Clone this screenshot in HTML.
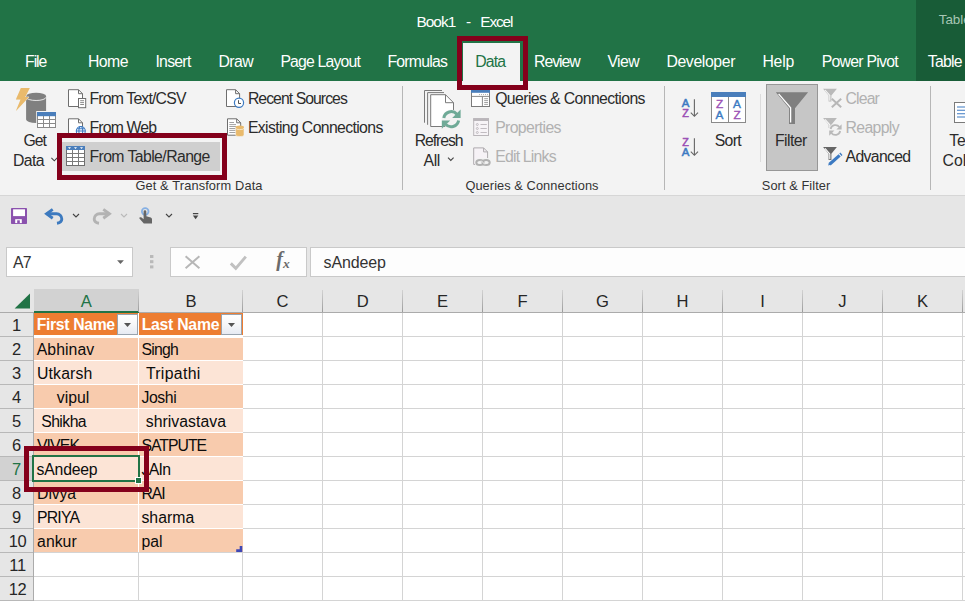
<!DOCTYPE html>
<html lang="en"><head><meta charset="utf-8"><title>Book1 - Excel</title>
<style>
*{margin:0;padding:0;box-sizing:border-box}
html,body{width:965px;height:601px;overflow:hidden;background:#e6e6e6}
body{font-family:"Liberation Sans",sans-serif}
#app{position:relative;width:965px;height:601px;overflow:hidden;background:#e6e6e6}
#app div,#app svg{position:absolute}
.t{position:absolute;white-space:nowrap;line-height:0;z-index:3}
.z5{z-index:5}
#txt{position:absolute;left:0;top:0;width:965px;height:601px;overflow:hidden}
.redbox{border:5px solid #7e0a1f;z-index:6}
.gl{background:#d4d4d4}

</style></head><body>
<div id="app">
<div style="left:0;top:0;width:965px;height:81px;background:#217346"></div>
<div style="left:916px;top:0;width:49px;height:81px;background:#185c37"></div>
<div style="left:463px;top:43px;width:57px;height:39px;background:#f3f3f3"></div>
<div style="left:0;top:81px;width:965px;height:114px;background:#f3f3f3"></div>
<div style="left:0;top:195px;width:965px;height:1px;background:#d6d6d6"></div>
<div style="left:402px;top:86px;width:1px;height:104px;background:#b6b6b6"></div>
<div style="left:664px;top:86px;width:1px;height:104px;background:#b6b6b6"></div>
<div style="left:930px;top:86px;width:1px;height:104px;background:#b6b6b6"></div>
<div style="left:760px;top:94px;width:1px;height:68px;background:#dcdcdc"></div>
<div style="left:62px;top:142px;width:158px;height:29px;background:#cfcfcf"></div>
<div style="left:766px;top:84px;width:52px;height:87px;background:#c6c6c6;border:1px solid #979797"></div>
<div style="left:6px;top:247px;width:127px;height:30px;background:#fff;border:1px solid #c9c9c9"></div>
<div style="left:170px;top:247px;width:137px;height:30px;background:#fdfdfd;border:1px solid #c9c9c9"></div>
<div style="left:310px;top:247px;width:660px;height:30px;background:#fdfdfd;border:1px solid #c9c9c9"></div>
<div style="left:34px;top:313px;width:931px;height:288px;background:#fff"></div>
<div style="left:34px;top:289px;width:105px;height:22px;background:#d2d2d2"></div>
<div style="left:34px;top:311px;width:105px;height:2px;background:#217346"></div>
<div style="left:139px;top:312px;width:826px;height:1px;background:#ababab"></div>
<div style="left:0px;top:312px;width:34px;height:1px;background:#ababab"></div>
<div style="left:138px;top:290px;width:1px;height:22px;background:linear-gradient(#d2d2d2,#9c9c9c)"></div>
<div style="left:242px;top:290px;width:1px;height:22px;background:linear-gradient(#d2d2d2,#9c9c9c)"></div>
<div style="left:322px;top:290px;width:1px;height:22px;background:linear-gradient(#d2d2d2,#9c9c9c)"></div>
<div style="left:402px;top:290px;width:1px;height:22px;background:linear-gradient(#d2d2d2,#9c9c9c)"></div>
<div style="left:482px;top:290px;width:1px;height:22px;background:linear-gradient(#d2d2d2,#9c9c9c)"></div>
<div style="left:562px;top:290px;width:1px;height:22px;background:linear-gradient(#d2d2d2,#9c9c9c)"></div>
<div style="left:642px;top:290px;width:1px;height:22px;background:linear-gradient(#d2d2d2,#9c9c9c)"></div>
<div style="left:722px;top:290px;width:1px;height:22px;background:linear-gradient(#d2d2d2,#9c9c9c)"></div>
<div style="left:802px;top:290px;width:1px;height:22px;background:linear-gradient(#d2d2d2,#9c9c9c)"></div>
<div style="left:882px;top:290px;width:1px;height:22px;background:linear-gradient(#d2d2d2,#9c9c9c)"></div>
<div style="left:962px;top:290px;width:1px;height:22px;background:linear-gradient(#d2d2d2,#9c9c9c)"></div>
<div class="gl" style="left:138px;top:313px;width:1px;height:288px"></div>
<div class="gl" style="left:242px;top:313px;width:1px;height:288px"></div>
<div class="gl" style="left:322px;top:313px;width:1px;height:288px"></div>
<div class="gl" style="left:402px;top:313px;width:1px;height:288px"></div>
<div class="gl" style="left:482px;top:313px;width:1px;height:288px"></div>
<div class="gl" style="left:562px;top:313px;width:1px;height:288px"></div>
<div class="gl" style="left:642px;top:313px;width:1px;height:288px"></div>
<div class="gl" style="left:722px;top:313px;width:1px;height:288px"></div>
<div class="gl" style="left:802px;top:313px;width:1px;height:288px"></div>
<div class="gl" style="left:882px;top:313px;width:1px;height:288px"></div>
<div class="gl" style="left:962px;top:313px;width:1px;height:288px"></div>
<div class="gl" style="left:34px;top:336px;width:931px;height:1px"></div>
<div class="gl" style="left:34px;top:360px;width:931px;height:1px"></div>
<div class="gl" style="left:34px;top:384px;width:931px;height:1px"></div>
<div class="gl" style="left:34px;top:408px;width:931px;height:1px"></div>
<div class="gl" style="left:34px;top:432px;width:931px;height:1px"></div>
<div class="gl" style="left:34px;top:456px;width:931px;height:1px"></div>
<div class="gl" style="left:34px;top:480px;width:931px;height:1px"></div>
<div class="gl" style="left:34px;top:504px;width:931px;height:1px"></div>
<div class="gl" style="left:34px;top:528px;width:931px;height:1px"></div>
<div class="gl" style="left:34px;top:552px;width:931px;height:1px"></div>
<div class="gl" style="left:34px;top:576px;width:931px;height:1px"></div>
<div class="gl" style="left:34px;top:600px;width:931px;height:1px"></div>
<div style="left:33px;top:313px;width:1px;height:288px;background:#ababab"></div>
<div style="left:0px;top:336px;width:33px;height:1px;background:#b8b8b8"></div>
<div style="left:0px;top:360px;width:33px;height:1px;background:#b8b8b8"></div>
<div style="left:0px;top:384px;width:33px;height:1px;background:#b8b8b8"></div>
<div style="left:0px;top:408px;width:33px;height:1px;background:#b8b8b8"></div>
<div style="left:0px;top:432px;width:33px;height:1px;background:#b8b8b8"></div>
<div style="left:0px;top:456px;width:33px;height:1px;background:#b8b8b8"></div>
<div style="left:0px;top:480px;width:33px;height:1px;background:#b8b8b8"></div>
<div style="left:0px;top:504px;width:33px;height:1px;background:#b8b8b8"></div>
<div style="left:0px;top:528px;width:33px;height:1px;background:#b8b8b8"></div>
<div style="left:0px;top:552px;width:33px;height:1px;background:#b8b8b8"></div>
<div style="left:0px;top:576px;width:33px;height:1px;background:#b8b8b8"></div>
<div style="left:0px;top:600px;width:33px;height:1px;background:#b8b8b8"></div>
<div style="left:0px;top:457px;width:32px;height:23px;background:#d2d2d2"></div>
<div style="left:32px;top:457px;width:2px;height:23px;background:#217346"></div>
<div style="left:34px;top:313px;width:209px;height:22px;background:#ed7d31"></div>
<div style="left:34px;top:335px;width:209px;height:3px;background:#fff"></div>
<div style="left:34px;top:338px;width:209px;height:22px;background:#f8cbad"></div>
<div style="left:34px;top:361px;width:209px;height:23px;background:#fce4d6"></div>
<div style="left:34px;top:360px;width:209px;height:1px;background:#fff"></div>
<div style="left:34px;top:385px;width:209px;height:23px;background:#f8cbad"></div>
<div style="left:34px;top:384px;width:209px;height:1px;background:#fff"></div>
<div style="left:34px;top:409px;width:209px;height:23px;background:#fce4d6"></div>
<div style="left:34px;top:408px;width:209px;height:1px;background:#fff"></div>
<div style="left:34px;top:433px;width:209px;height:23px;background:#f8cbad"></div>
<div style="left:34px;top:432px;width:209px;height:1px;background:#fff"></div>
<div style="left:34px;top:457px;width:209px;height:23px;background:#fce4d6"></div>
<div style="left:34px;top:456px;width:209px;height:1px;background:#fff"></div>
<div style="left:34px;top:481px;width:209px;height:23px;background:#f8cbad"></div>
<div style="left:34px;top:480px;width:209px;height:1px;background:#fff"></div>
<div style="left:34px;top:505px;width:209px;height:23px;background:#fce4d6"></div>
<div style="left:34px;top:504px;width:209px;height:1px;background:#fff"></div>
<div style="left:34px;top:529px;width:209px;height:23px;background:#f8cbad"></div>
<div style="left:34px;top:528px;width:209px;height:1px;background:#fff"></div>
<div style="left:138px;top:313px;width:1px;height:239px;background:#fff"></div>
<div style="left:32px;top:455px;width:108px;height:27px;border:2px solid #217346;z-index:4"></div>
<div style="left:135px;top:477px;width:7px;height:7px;background:#217346;border:1px solid #fff;z-index:4"></div>
<div class="redbox" style="left:457px;top:36px;width:71px;height:54px;border-color:#84001b"></div>
<div class="redbox" style="left:57px;top:133px;width:170px;height:47px;border-color:#84001b"></div>
<div class="redbox" style="left:24px;top:446px;width:125px;height:46px;border-color:#84001b"></div>
<svg style="left:0;top:0;z-index:2" width="965" height="601" viewBox="0 0 965 601">
<!-- Get Data -->
<g>
<path d="M26.1,96.1 V119.6 A10,3.3 0 0 0 46.1,119.6 V96.1 Z" fill="#808080"/>
<ellipse cx="36.1" cy="96.1" rx="10" ry="3.3" fill="#808080"/>
<path d="M26.3,97.3 A9.8,3.2 0 0 0 45.9,97.3" stroke="#f3f3f3" stroke-width="0.9" fill="none"/>
<polygon points="20.9,88 29.8,88 25.2,97 28.9,97 15.9,111 20.6,99.6 15.9,99.6" fill="#e9ba6c" stroke="#f3f3f3" stroke-width="0.8"/>
<polygon points="20.9,88 29.8,88 25.2,97 28.9,97 15.9,111 20.6,99.6 15.9,99.6" fill="#e9ba6c"/>
<rect x="36.2" y="111" width="20.6" height="17.6" fill="#f3f3f3"/>
<rect x="37.5" y="112.5" width="18" height="15" fill="#fff" stroke="#8a8a8a" stroke-width="1"/>
<rect x="37" y="112" width="19" height="4.2" fill="#4a7ebb"/>
<path d="M43.5,116 V127.5 M49.5,116 V127.5 M37.5,119.5 H55.5 M37.5,123.5 H55.5" stroke="#8a8a8a" stroke-width="1" fill="none"/>
</g>
<!-- Data chevron -->
<path d="M51.4,157.9 L54.3,160.8 L57.2,157.9" stroke="#444" stroke-width="1.1" fill="none"/>
<!-- From Text/CSV -->
<g fill="#fff" stroke="#6e6e6e" stroke-width="1">
<path d="M68.5,89.7 H78.5 L82.5,93.7 V106.5 H68.5 Z"/>
<path d="M78.5,89.7 V93.7 H82.5" fill="none"/>
<rect x="78.5" y="98.5" width="7.2" height="9.2"/>
<path d="M80.2,100.7 H84 M80.2,102.6 H84 M80.2,104.5 H84" stroke-width="0.8"/>
</g>
<!-- From Web -->
<g fill="#fff" stroke="#6e6e6e" stroke-width="1">
<path d="M68.5,118.8 H78.5 L82.5,122.8 V135.6 H68.5 Z"/>
<path d="M78.5,118.8 V122.8 H82.5" fill="none"/>
</g>
<g stroke="#3c7ac2" stroke-width="1.1" fill="#fff">
<circle cx="80.8" cy="131" r="4.5"/>
<ellipse cx="80.8" cy="131" rx="1.9" ry="4.5" fill="none"/>
<path d="M76.3,131 H85.3 M77,128.8 H84.6" fill="none"/>
</g>
<!-- From Table/Range icon -->
<g style="">
<rect x="66.5" y="146.5" width="18" height="19" fill="#fff" stroke="#6e6e6e"/>
<rect x="66" y="146" width="19" height="4" fill="#4a7ebb"/>
<path d="M72.5,150 V165 M78.5,150 V165 M67,153.5 H84 M67,157.5 H84 M67,161.5 H84" stroke="#7a7a7a" stroke-width="1" fill="none"/>
<path d="M68,147.2 h3 l-1.5,1.7z M74,147.2 h3 l-1.5,1.7z M80,147.2 h3 l-1.5,1.7z" fill="#fff"/>
</g>
<!-- Recent Sources -->
<g fill="#fff" stroke="#6e6e6e" stroke-width="1">
<path d="M226.5,89.7 H235.6 L239.6,93.7 V106.5 H226.5 Z"/>
<path d="M235.6,89.7 V93.7 H239.6" fill="none"/>
</g>
<circle cx="239" cy="102.7" r="4.6" fill="#fff" stroke="#3c7ac2" stroke-width="1.2"/>
<path d="M238.5,100.2 V103.5 H241" stroke="#555" stroke-width="1" fill="none"/>
<!-- Existing Connections -->
<g fill="#fff" stroke="#6e6e6e" stroke-width="1">
<path d="M227.5,118.8 H236.7 L240.7,122.8 V135.2 H227.5 Z"/>
<path d="M236.7,118.8 V122.8 H240.7" fill="none"/>
<path d="M229.3,122.5 H234 M229.3,124.6 H236 M229.3,126.5 H236 M229.3,128.5 H236 M229.3,130.4 H236 M229.3,132.5 H236" stroke="#8a8a8a" stroke-width="0.8"/>
</g>
<path d="M235.6,127 V135 A4.2,1.6 0 0 0 244,135 V127 Z" fill="#e9ba6c" stroke="#f3f3f3" stroke-width="0.6"/>
<ellipse cx="239.8" cy="127" rx="4.2" ry="1.6" fill="#e9ba6c"/>
<path d="M235.8,128.2 A4,1.4 0 0 0 243.8,128.2" stroke="#fbf3e3" stroke-width="0.7" fill="none"/>
<!-- Refresh All -->
<g fill="none" stroke="#7a7a7a" stroke-width="1">
<path d="M442,90.5 H424.5 V122.7"/>
<path d="M444,92.6 H427.6 V124.8"/>
<path d="M430.7,94.7 H445.5 L453.5,102.7 V126.5 H430.7 Z" fill="#fff"/>
<path d="M445.5,94.7 V102.7 H453.5"/>
</g>
<g>
<circle cx="451.2" cy="119.2" r="9.6" fill="#f3f3f3" stroke="none"/>
<path d="M443.8,117.9 A7.5,7.5 0 0 1 456.9,114.3" stroke="#6faa97" stroke-width="3" fill="none"/>
<path d="M458.6,120.5 A7.5,7.5 0 0 1 445.5,124.1" stroke="#6faa97" stroke-width="3" fill="none"/>
<polygon points="460.6,109.6 460.6,118 452.2,118" fill="#6faa97"/>
<polygon points="441.8,128.8 441.8,120.4 450.2,120.4" fill="#6faa97"/>
</g>
<!-- All chevron -->
<path d="M448,157.6 L450.8,160.4 L453.6,157.6" stroke="#444" stroke-width="1.1" fill="none"/>
<!-- Queries & Connections icon -->
<g>
<rect x="471.5" y="90.5" width="18" height="16" fill="#fff" stroke="#7a7a7a"/>
<rect x="471" y="90" width="19" height="2.8" fill="#4a7ebb"/>
<path d="M472,96.4 H489 M482.4,96.4 V106" stroke="#8a8a8a" stroke-width="1" fill="none"/>
<path d="M484.2,98.7 H488 M484.2,100.6 H488 M484.2,102.5 H488 M484.2,104.4 H488" stroke="#8a8a8a" stroke-width="0.8" fill="none"/>
<path d="M479,94.6 H488.5" stroke="#8a8a8a" stroke-width="0.8" stroke-dasharray="0.9 1.1" fill="none"/>
</g>
<!-- Properties -->
<g>
<rect x="473.7" y="118.7" width="14.8" height="16.8" fill="#f7f4f7" stroke="#bab6ba"/>
<rect x="473.2" y="118.2" width="15.8" height="2.8" fill="#bab6ba"/>
<g fill="none" stroke="#bab6ba" stroke-width="0.9">
<circle cx="477.3" cy="124.5" r="1"/><circle cx="477.3" cy="128.5" r="1"/><circle cx="477.3" cy="132.5" r="1"/>
<path d="M480.5,124.5 H486.8 M480.5,128.5 H486.8 M480.5,132.5 H486.8"/>
</g>
</g>
<!-- Edit Links -->
<g>
<path d="M473.7,147.9 H483.6 L487.6,151.9 V164.4 H473.7 Z" fill="#f6f2f6" stroke="#aeaaae"/>
<path d="M483.6,147.9 V151.9 H487.6" fill="none" stroke="#aeaaae"/>
<rect x="474.6" y="158" width="17" height="9" rx="4.4" fill="#f3f3f3"/>
<ellipse cx="479.9" cy="162.5" rx="3.6" ry="2.5" fill="none" stroke="#b1b1b1" stroke-width="2"/>
<ellipse cx="486.1" cy="162.5" rx="3.6" ry="2.5" fill="none" stroke="#b1b1b1" stroke-width="2"/>
<path d="M481.2,160.6 L484.8,164.4" stroke="#f3f3f3" stroke-width="0.9" fill="none"/>
</g>
<!-- AZ sort -->
<g font-family="Liberation Sans, sans-serif" font-size="11.4" stroke-width="0.55">
<text x="681.8" y="107.3" fill="#3c7ac2" stroke="#3c7ac2">A</text>
<text x="682.2" y="116.6" fill="#9b4fb5" stroke="#9b4fb5" font-size="10.8">Z</text>
<text x="682.2" y="145.6" fill="#9b4fb5" stroke="#9b4fb5" font-size="10.8">Z</text>
<text x="681.8" y="155.6" fill="#3c7ac2" stroke="#3c7ac2">A</text>
</g>
<path d="M694.4,99.3 V116 M690.8,112.6 L694.4,116.3 L698,112.6" stroke="#666" stroke-width="1.1" fill="none"/>
<path d="M694.4,138.3 V155 M690.8,151.6 L694.4,155.3 L698,151.6" stroke="#666" stroke-width="1.1" fill="none"/>
<!-- Sort icon -->
<rect x="711.5" y="92.5" width="34" height="30" fill="#fff" stroke="#8a8a8a"/>
<rect x="711" y="92" width="35" height="5" fill="#4a7ebb"/>
<path d="M728.5,97 V122.5" stroke="#8a8a8a" stroke-width="1"/>
<g font-family="Liberation Sans, sans-serif" font-size="11.8" stroke-width="0.4">
<text x="716" y="107.7" fill="#9b4fb5" stroke="#9b4fb5">Z</text>
<text x="715.6" y="118.9" fill="#3c7ac2" stroke="#3c7ac2">A</text>
<text x="733" y="107.7" fill="#3c7ac2" stroke="#3c7ac2">A</text>
<text x="733.6" y="118.9" fill="#9b4fb5" stroke="#9b4fb5">Z</text>
</g>
<!-- Filter funnel -->
<path d="M775.8,92.2 H808.1 L795,108.2 V123.9 H789 V108.2 Z" fill="#7f7f7f"/>
<path d="M778.6,93.8 L790.6,107.8 V122.6" stroke="#fff" stroke-width="1.3" fill="none"/>
<!-- Clear -->
<path d="M823.1,88.7 H836.9 L831.4,95.4 V101.5 H828.6 V95.4 Z" fill="#b9b9b9"/>
<path d="M825,90 L829.8,95.5 V100.8" stroke="#f7f7f7" stroke-width="1.1" fill="none"/>
<path d="M831.8,98.8 L841.2,107.2 M841.2,98.8 L831.8,107.2" stroke="#b7b7b7" stroke-width="2" fill="none"/>
<!-- Reapply -->
<path d="M823.1,118 H836.9 L831.4,124.7 V128 H828.6 V124.7 Z" fill="#b9b9b9"/>
<path d="M825,119.3 L829.8,124.8 V127.6" stroke="#f7f7f7" stroke-width="1.1" fill="none"/>
<g>
<circle cx="835.4" cy="130" r="6.6" fill="#f3f3f3"/>
<path d="M830.6,129 A5,5 0 0 1 839.4,127" stroke="#b9b9b9" stroke-width="1.8" fill="none"/>
<path d="M840.2,131 A5,5 0 0 1 831.4,133" stroke="#b9b9b9" stroke-width="1.8" fill="none"/>
<polygon points="841.6,124.2 841.6,129.4 836.4,129.4" fill="#b9b9b9"/>
<polygon points="829.2,135.8 829.2,130.6 834.4,130.6" fill="#b9b9b9"/>
</g>
<!-- Advanced -->
<path d="M823.1,147.1 H836.9 L831.4,153.8 V159.9 H828.6 V153.8 Z" fill="#666"/>
<path d="M825,148.4 L829.8,153.9 V159.2" stroke="#fff" stroke-width="1.1" fill="none"/>
<path d="M829.6,164.2 L839.6,155.4" stroke="#3c7ac2" stroke-width="3.2" fill="none"/>
<path d="M840.4,154.7 L841.4,153.8" stroke="#3c7ac2" stroke-width="3.2" fill="none"/>
<polygon points="828.2,165.4 828.8,163 830.6,164.8" fill="#3c7ac2"/>
<!-- Text to Columns partial icon -->
<rect x="954.5" y="102.5" width="20" height="20" fill="#fff" stroke="#7a7a7a"/>
<path d="M957,107 H965 M957,110.3 H965 M957,113.7 H965 M957,117 H965" stroke="#3c7ac2" stroke-width="1.1" fill="none"/>
<!-- QAT: save -->
<rect x="11" y="208" width="16" height="16" rx="0.8" fill="#8b52ae"/>
<rect x="13.1" y="209.3" width="11.9" height="6.8" fill="#fff"/>
<rect x="15.2" y="219.2" width="6.6" height="3.9" fill="#fff"/>
<rect x="17.2" y="220.3" width="2.6" height="2.9" fill="#8b52ae"/>
<!-- undo -->
<path d="M52.7,209.4 L46.6,213.8 L52.7,218.2" stroke="#3d7abf" stroke-width="2.9" fill="none" stroke-linejoin="miter"/>
<path d="M46.8,213.8 H56.5 A5.2,5.2 0 0 1 61.8,219 Q61.8,222.5 57,223.2" stroke="#3d7abf" stroke-width="2.9" fill="none"/>
<path d="M73,214 L76,217 L79,214" stroke="#444" stroke-width="1.1" fill="none"/>
<!-- redo -->
<path d="M103.3,209.4 L109.4,213.8 L103.3,218.2" stroke="#b3b3b3" stroke-width="2.9" fill="none"/>
<path d="M109.2,213.8 H99.5 A5.2,5.2 0 0 0 94.2,219 Q94.2,222.5 99,223.2" stroke="#b3b3b3" stroke-width="2.9" fill="none"/>
<path d="M121,214 L124,217 L127,214" stroke="#b9b9b9" stroke-width="1.1" fill="none"/>
<!-- touch -->
<circle cx="145.2" cy="211.5" r="3.3" fill="none" stroke="#86b0e4" stroke-width="1.8"/>
<path d="M143.6,211.4 Q143.6,210.2 144.9,210.2 Q146.3,210.2 146.3,211.4 V216.2 L150.8,217.4 Q152,217.8 152,219.2 V223.6 H143.8 L139.4,218.6 Q139,217.6 140,217.2 Q140.8,217 141.6,217.6 L143.6,219.2 Z" fill="#666"/>
<path d="M166,214 L169,217 L172,214" stroke="#444" stroke-width="1.1" fill="none"/>
<!-- customize -->
<rect x="192.9" y="213" width="5.4" height="1.2" fill="#444"/>
<polygon points="192.9,215.6 198.3,215.6 195.6,219.2" fill="#444"/>
<!-- name box arrow -->
<polygon points="117.1,260.2 123.9,260.2 120.5,264" fill="#666"/>
<!-- dots -->
<g fill="#b9b9b9"><rect x="150" y="255" width="3.4" height="3"/><rect x="150" y="260.2" width="3.4" height="3"/><rect x="150" y="265.4" width="3.4" height="3"/></g>
<!-- X, check -->
<path d="M185.6,256.2 L199.4,268.2 M199.4,256.2 L185.6,268.2" stroke="#b7b7b7" stroke-width="2" fill="none"/>
<path d="M230.8,263.4 L235.8,268.4 L245.8,256.6" stroke="#c1c1c1" stroke-width="2.9" fill="none"/>
<g font-family="Liberation Serif, serif" font-style="italic" font-weight="bold" fill="#6b6b6b"><text x="276.2" y="266.4" font-size="20">f</text><text x="283" y="268" font-size="13.5">x</text></g>
<!-- corner triangle -->
<polygon points="30,293.4 30,308.6 14.6,308.6" fill="#217346"/>
<!-- header filter buttons -->
<defs><linearGradient id="fb" x1="0" y1="0" x2="0" y2="1"><stop offset="0" stop-color="#ffffff"/><stop offset="0.5" stop-color="#f6f7f9"/><stop offset="1" stop-color="#e6eaf2"/></linearGradient></defs>
<g>
<rect x="117.5" y="314.5" width="20" height="20" fill="url(#fb)" stroke="#9aa3ad"/>
<polygon points="124,323 131,323 127.5,327" fill="#555"/>
<rect x="221.5" y="314.5" width="20" height="20" fill="url(#fb)" stroke="#9aa3ad"/>
<polygon points="228,323 235,323 231.5,327" fill="#555"/>
</g>
<!-- table resize handle -->
<path d="M241,546 V550.6 H236.2" stroke="#3f48b5" stroke-width="2.6" fill="none"/>
</svg>

<div id="txt">
<span class="t" style="font-size:15.4px;color:#ffffff;letter-spacing:-0.948px;left:416.40px;top:22.36px;">Book1</span>
<span class="t" style="font-size:15.4px;color:#ffffff;letter-spacing:-0.541px;left:466.10px;top:22.36px;">-</span>
<span class="t" style="font-size:15.4px;color:#ffffff;letter-spacing:-1.128px;left:480.30px;top:22.36px;">Excel</span>
<span class="t" style="font-size:13.4px;color:#a7c7b4;left:938.70px;top:19.96px;">Table Tools</span>
<span class="t" style="font-size:15.8px;color:#ffffff;letter-spacing:-1.017px;left:25.00px;top:61.53px;">File</span>
<span class="t" style="font-size:15.8px;color:#ffffff;letter-spacing:-0.485px;left:87.90px;top:61.53px;">Home</span>
<span class="t" style="font-size:15.8px;color:#ffffff;letter-spacing:-0.719px;left:155.40px;top:61.53px;">Insert</span>
<span class="t" style="font-size:15.8px;color:#ffffff;letter-spacing:-0.544px;left:218.40px;top:61.53px;">Draw</span>
<span class="t" style="font-size:15.8px;color:#ffffff;letter-spacing:-0.820px;left:280.40px;top:61.53px;">Page Layout</span>
<span class="t" style="font-size:15.8px;color:#ffffff;letter-spacing:-0.768px;left:387.40px;top:61.53px;">Formulas</span>
<span class="t" style="font-size:15.8px;color:#217346;letter-spacing:-0.869px;left:475.20px;top:61.53px;">Data</span>
<span class="t" style="font-size:15.8px;color:#ffffff;letter-spacing:-1.049px;left:534.10px;top:61.53px;">Review</span>
<span class="t" style="font-size:15.8px;color:#ffffff;letter-spacing:-0.567px;left:607.40px;top:61.53px;">View</span>
<span class="t" style="font-size:15.8px;color:#ffffff;letter-spacing:-0.368px;left:666.40px;top:61.53px;">Developer</span>
<span class="t" style="font-size:15.8px;color:#ffffff;letter-spacing:-0.200px;left:762.40px;top:61.53px;">Help</span>
<span class="t" style="font-size:15.8px;color:#ffffff;letter-spacing:-0.736px;left:821.70px;top:61.53px;">Power Pivot</span>
<span class="t" style="font-size:15.8px;color:#ffffff;letter-spacing:-0.733px;left:927.80px;top:61.53px;">Table</span>
<span class="t" style="font-size:15.8px;color:#ffffff;left:967.50px;top:61.53px;">Design</span>
<span class="t" style="font-size:15.8px;color:#2b2b2b;letter-spacing:-0.809px;left:89.40px;top:98.53px;">From Text/CSV</span>
<span class="t" style="font-size:15.8px;color:#2b2b2b;letter-spacing:-0.819px;left:89.40px;top:127.53px;">From Web</span>
<span class="t z5" style="font-size:15.8px;color:#2b2b2b;letter-spacing:-0.579px;left:89.40px;top:156.53px;">From Table/Range</span>
<span class="t" style="font-size:15.8px;color:#2b2b2b;letter-spacing:-1.023px;left:23.50px;top:140.53px;">Get</span>
<span class="t" style="font-size:15.8px;color:#2b2b2b;letter-spacing:-0.644px;left:13.10px;top:160.53px;">Data</span>
<span class="t" style="font-size:12.8px;color:#333;letter-spacing:0.137px;left:135.40px;top:185.96px;">Get &amp; Transform Data</span>
<span class="t" style="font-size:15.8px;color:#2b2b2b;letter-spacing:-0.958px;left:247.90px;top:98.53px;">Recent Sources</span>
<span class="t" style="font-size:15.8px;color:#2b2b2b;letter-spacing:-0.637px;left:247.90px;top:127.53px;">Existing Connections</span>
<span class="t" style="font-size:15.8px;color:#2b2b2b;letter-spacing:-1.087px;left:414.80px;top:140.53px;">Refresh</span>
<span class="t" style="font-size:15.8px;color:#2b2b2b;letter-spacing:-0.288px;left:423.40px;top:160.53px;">All</span>
<span class="t" style="font-size:15.8px;color:#2b2b2b;letter-spacing:-0.607px;left:495.20px;top:98.53px;">Queries &amp; Connections</span>
<span class="t" style="font-size:15.8px;color:#b1b1b1;letter-spacing:-0.640px;left:495.20px;top:127.53px;">Properties</span>
<span class="t" style="font-size:15.8px;color:#b1b1b1;letter-spacing:-0.790px;left:495.20px;top:156.53px;">Edit Links</span>
<span class="t" style="font-size:12.8px;color:#333;letter-spacing:0.076px;left:465.40px;top:185.96px;">Queries &amp; Connections</span>
<span class="t" style="font-size:15.8px;color:#2b2b2b;letter-spacing:-0.721px;left:714.80px;top:140.53px;">Sort</span>
<span class="t" style="font-size:15.8px;color:#2b2b2b;letter-spacing:-0.585px;left:775.00px;top:140.53px;">Filter</span>
<span class="t" style="font-size:15.8px;color:#b1b1b1;letter-spacing:-0.890px;left:845.60px;top:98.53px;">Clear</span>
<span class="t" style="font-size:15.8px;color:#b1b1b1;letter-spacing:-0.667px;left:845.60px;top:127.53px;">Reapply</span>
<span class="t" style="font-size:15.8px;color:#2b2b2b;letter-spacing:-0.671px;left:845.60px;top:156.83px;">Advanced</span>
<span class="t" style="font-size:12.8px;color:#333;letter-spacing:0.080px;left:761.80px;top:185.96px;">Sort &amp; Filter</span>
<span class="t" style="font-size:15.8px;color:#2b2b2b;left:949.20px;top:140.53px;">Text to</span>
<span class="t" style="font-size:15.8px;color:#2b2b2b;left:942.50px;top:160.53px;">Columns</span>
<span class="t" style="font-size:15.8px;color:#333;letter-spacing:-0.864px;left:13.10px;top:263.13px;">A7</span>
<span class="t" style="font-size:16px;color:#333;letter-spacing:-0.153px;left:323.60px;top:262.96px;">sAndeep</span>
<span class="t" style="font-size:16.6px;color:#217346;left:80.76px;top:301.55px;">A</span>
<span class="t" style="font-size:16.6px;color:#262626;left:185.46px;top:301.55px;">B</span>
<span class="t" style="font-size:16.6px;color:#262626;left:276.41px;top:301.55px;">C</span>
<span class="t" style="font-size:16.6px;color:#262626;left:356.71px;top:301.55px;">D</span>
<span class="t" style="font-size:16.6px;color:#262626;left:436.96px;top:301.55px;">E</span>
<span class="t" style="font-size:16.6px;color:#262626;left:517.43px;top:301.55px;">F</span>
<span class="t" style="font-size:16.6px;color:#262626;left:596.04px;top:301.55px;">G</span>
<span class="t" style="font-size:16.6px;color:#262626;left:676.51px;top:301.55px;">H</span>
<span class="t" style="font-size:16.6px;color:#262626;left:760.19px;top:301.55px;">I</span>
<span class="t" style="font-size:16.6px;color:#262626;left:838.35px;top:301.55px;">J</span>
<span class="t" style="font-size:16.6px;color:#262626;left:916.96px;top:301.55px;">K</span>
<span class="t" style="font-size:16.5px;color:#262626;left:11.91px;top:324.68px;">1</span>
<span class="t" style="font-size:16.5px;color:#262626;left:11.91px;top:348.68px;">2</span>
<span class="t" style="font-size:16.5px;color:#262626;left:11.91px;top:372.68px;">3</span>
<span class="t" style="font-size:16.5px;color:#262626;left:11.91px;top:396.68px;">4</span>
<span class="t" style="font-size:16.5px;color:#262626;left:11.91px;top:420.68px;">5</span>
<span class="t" style="font-size:16.5px;color:#262626;left:11.91px;top:444.68px;">6</span>
<span class="t" style="font-size:16.5px;color:#217346;left:11.91px;top:468.68px;">7</span>
<span class="t" style="font-size:16.5px;color:#262626;left:11.91px;top:492.68px;">8</span>
<span class="t" style="font-size:16.5px;color:#262626;left:11.91px;top:516.68px;">9</span>
<span class="t" style="font-size:16.5px;color:#262626;left:8.72px;top:540.68px;letter-spacing:-0.4px;">10</span>
<span class="t" style="font-size:16.5px;color:#262626;left:9.33px;top:564.68px;letter-spacing:-0.4px;">11</span>
<span class="t" style="font-size:16.5px;color:#262626;left:8.72px;top:588.68px;letter-spacing:-0.4px;">12</span>
<span class="t" style="font-size:15.8px;color:#ffffff;font-weight:bold;letter-spacing:-0.356px;left:36.70px;top:325.43px;">First Name</span>
<span class="t" style="font-size:15.8px;color:#ffffff;font-weight:bold;letter-spacing:-0.267px;left:141.70px;top:325.43px;">Last Name</span>
<span class="t" style="font-size:15.8px;color:#0c0c0c;letter-spacing:0.072px;left:36.70px;top:350.43px;">Abhinav</span>
<span class="t" style="font-size:15.8px;color:#0c0c0c;letter-spacing:-0.741px;left:141.40px;top:350.43px;">Singh</span>
<span class="t" style="font-size:15.8px;color:#0c0c0c;letter-spacing:0.180px;left:36.90px;top:374.43px;">Utkarsh</span>
<span class="t" style="font-size:15.8px;color:#0c0c0c;letter-spacing:0.326px;left:145.90px;top:374.43px;">Tripathi</span>
<span class="t" style="font-size:15.8px;color:#0c0c0c;letter-spacing:0.000px;left:56.80px;top:398.43px;">vipul</span>
<span class="t" style="font-size:15.8px;color:#0c0c0c;letter-spacing:-0.378px;left:141.40px;top:398.43px;">Joshi</span>
<span class="t" style="font-size:15.8px;color:#0c0c0c;letter-spacing:-0.569px;left:41.20px;top:422.43px;">Shikha</span>
<span class="t" style="font-size:15.8px;color:#0c0c0c;letter-spacing:0.045px;left:145.70px;top:422.43px;">shrivastava</span>
<span class="t" style="font-size:15.8px;color:#0c0c0c;letter-spacing:-0.869px;left:36.90px;top:446.43px;">VIVEK</span>
<span class="t" style="font-size:15.8px;color:#0c0c0c;letter-spacing:-0.998px;left:141.40px;top:446.43px;">SATPUTE</span>
<span class="t" style="font-size:15.8px;color:#0c0c0c;letter-spacing:-0.225px;left:36.60px;top:470.43px;">sAndeep</span>
<span class="t" style="font-size:15.8px;color:#0c0c0c;letter-spacing:-0.652px;left:141.40px;top:470.43px;">JAIn</span>
<span class="t" style="font-size:15.8px;color:#0c0c0c;letter-spacing:-0.120px;left:37.10px;top:494.43px;">Divya</span>
<span class="t" style="font-size:15.8px;color:#0c0c0c;letter-spacing:-0.981px;left:141.40px;top:494.43px;">RAI</span>
<span class="t" style="font-size:15.8px;color:#0c0c0c;letter-spacing:-0.847px;left:37.10px;top:518.43px;">PRIYA</span>
<span class="t" style="font-size:15.8px;color:#0c0c0c;letter-spacing:0.052px;left:141.40px;top:518.43px;">sharma</span>
<span class="t" style="font-size:15.8px;color:#0c0c0c;letter-spacing:0.017px;left:37.10px;top:542.43px;">ankur</span>
<span class="t" style="font-size:15.8px;color:#0c0c0c;letter-spacing:0.035px;left:141.40px;top:542.43px;">pal</span>
</div>
</div>
</body></html>
